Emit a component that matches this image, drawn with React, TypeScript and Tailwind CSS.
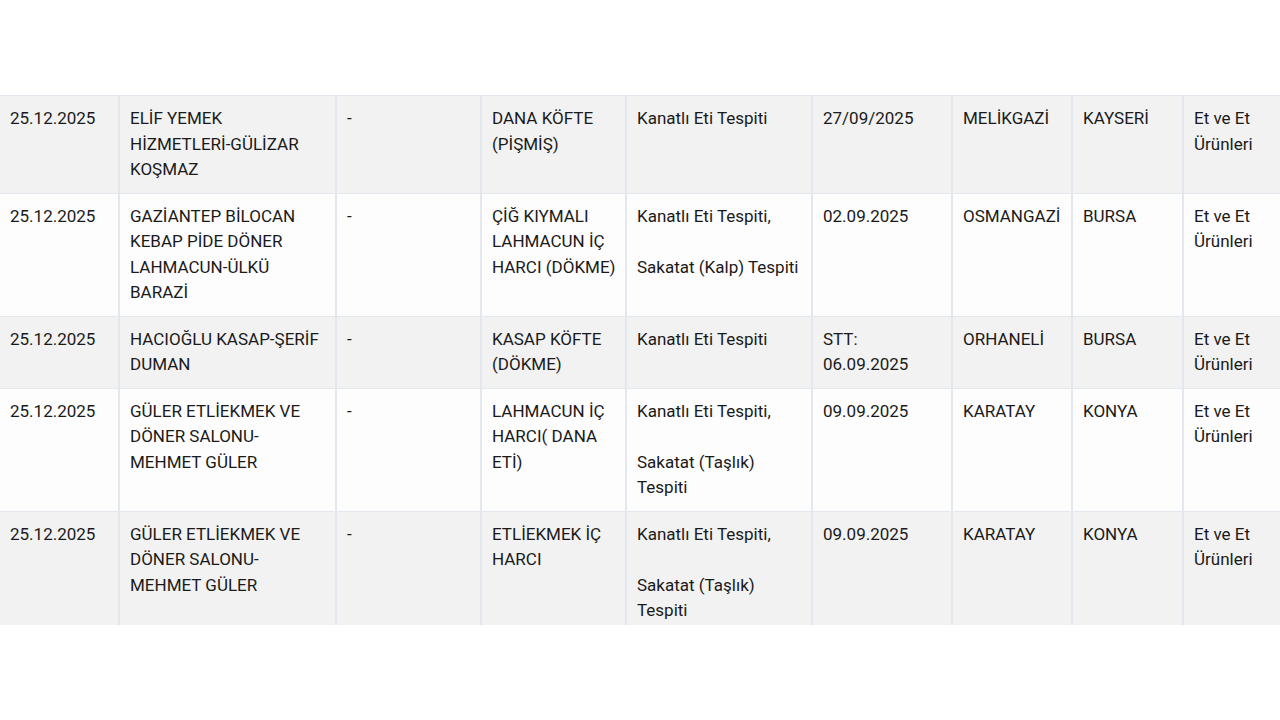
const widths = [119, 217, 145, 145, 186, 140, 120, 111, 97];

type Row = string[][];

const rows: Row[] = [
  [
    ['25.12.2025'],
    ['ELİF YEMEK HİZMETLERİ-GÜLİZAR KOŞMAZ'],
    ['-'],
    ['DANA KÖFTE (PİŞMİŞ)'],
    ['Kanatlı Eti Tespiti'],
    ['27/09/2025'],
    ['MELİKGAZİ'],
    ['KAYSERİ'],
    ['Et ve Et Ürünleri'],
  ],
  [
    ['25.12.2025'],
    ['GAZİANTEP BİLOCAN KEBAP PİDE DÖNER LAHMACUN-ÜLKÜ BARAZİ'],
    ['-'],
    ['ÇİĞ KIYMALI LAHMACUN İÇ HARCI (DÖKME)'],
    ['Kanatlı Eti Tespiti,', 'Sakatat (Kalp) Tespiti'],
    ['02.09.2025'],
    ['OSMANGAZİ'],
    ['BURSA'],
    ['Et ve Et Ürünleri'],
  ],
  [
    ['25.12.2025'],
    ['HACIOĞLU KASAP-ŞERİF DUMAN'],
    ['-'],
    ['KASAP KÖFTE (DÖKME)'],
    ['Kanatlı Eti Tespiti'],
    ['STT: 06.09.2025'],
    ['ORHANELİ'],
    ['BURSA'],
    ['Et ve Et Ürünleri'],
  ],
  [
    ['25.12.2025'],
    ['GÜLER ETLİEKMEK VE DÖNER SALONU-MEHMET GÜLER'],
    ['-'],
    ['LAHMACUN İÇ HARCI( DANA ETİ)'],
    ['Kanatlı Eti Tespiti,', 'Sakatat (Taşlık) Tespiti'],
    ['09.09.2025'],
    ['KARATAY'],
    ['KONYA'],
    ['Et ve Et Ürünleri'],
  ],
  [
    ['25.12.2025'],
    ['GÜLER ETLİEKMEK VE DÖNER SALONU-MEHMET GÜLER'],
    ['-'],
    ['ETLİEKMEK İÇ HARCI'],
    ['Kanatlı Eti Tespiti,', 'Sakatat (Taşlık) Tespiti'],
    ['09.09.2025'],
    ['KARATAY'],
    ['KONYA'],
    ['Et ve Et Ürünleri'],
  ],
];

// product column is a touch tighter on the right so "HARCI (DÖKME)" fits
const padR = ['pr-[10px]', 'pr-[10px]', 'pr-[10px]', 'pr-[5px]', 'pr-[10px]', 'pr-[10px]', 'pr-[10px]', 'pr-[10px]', 'pr-[10px]'];

export default function App() {
  return (
    <div
      className="w-[1280px] h-[720px] bg-white pt-[95px] overflow-hidden"
      style={{ fontFamily: 'Roboto, "Noto Sans", sans-serif' }}
    >
      <div className="h-[530px] overflow-hidden">
        <table className="table-fixed w-[1280px] border-collapse text-[17px] leading-[25.5px] text-[#1a1a1a]">
          <colgroup>
            {widths.map((w, i) => (
              <col key={i} style={{ width: w }} />
            ))}
          </colgroup>
          <tbody>
            {rows.map((row, ri) => (
              <tr
                key={ri}
                className={ri % 2 === 0 ? 'bg-[#f2f2f2]' : 'bg-[#fdfdfe]'}
              >
                {row.map((cell, ci) => (
                  <td
                    key={ci}
                    className={`align-top pl-[10px] ${padR[ci]} pt-[10px] pb-[10px] border-y border-[#e3e8ee] border-l-2 first:border-l-0`}
                  >
                    {cell.map((p, pi) => (
                      <div key={pi} className={pi > 0 ? 'mt-[25.5px]' : ''}>
                        {p}
                      </div>
                    ))}
                  </td>
                ))}
              </tr>
            ))}
          </tbody>
        </table>
      </div>
    </div>
  );
}
